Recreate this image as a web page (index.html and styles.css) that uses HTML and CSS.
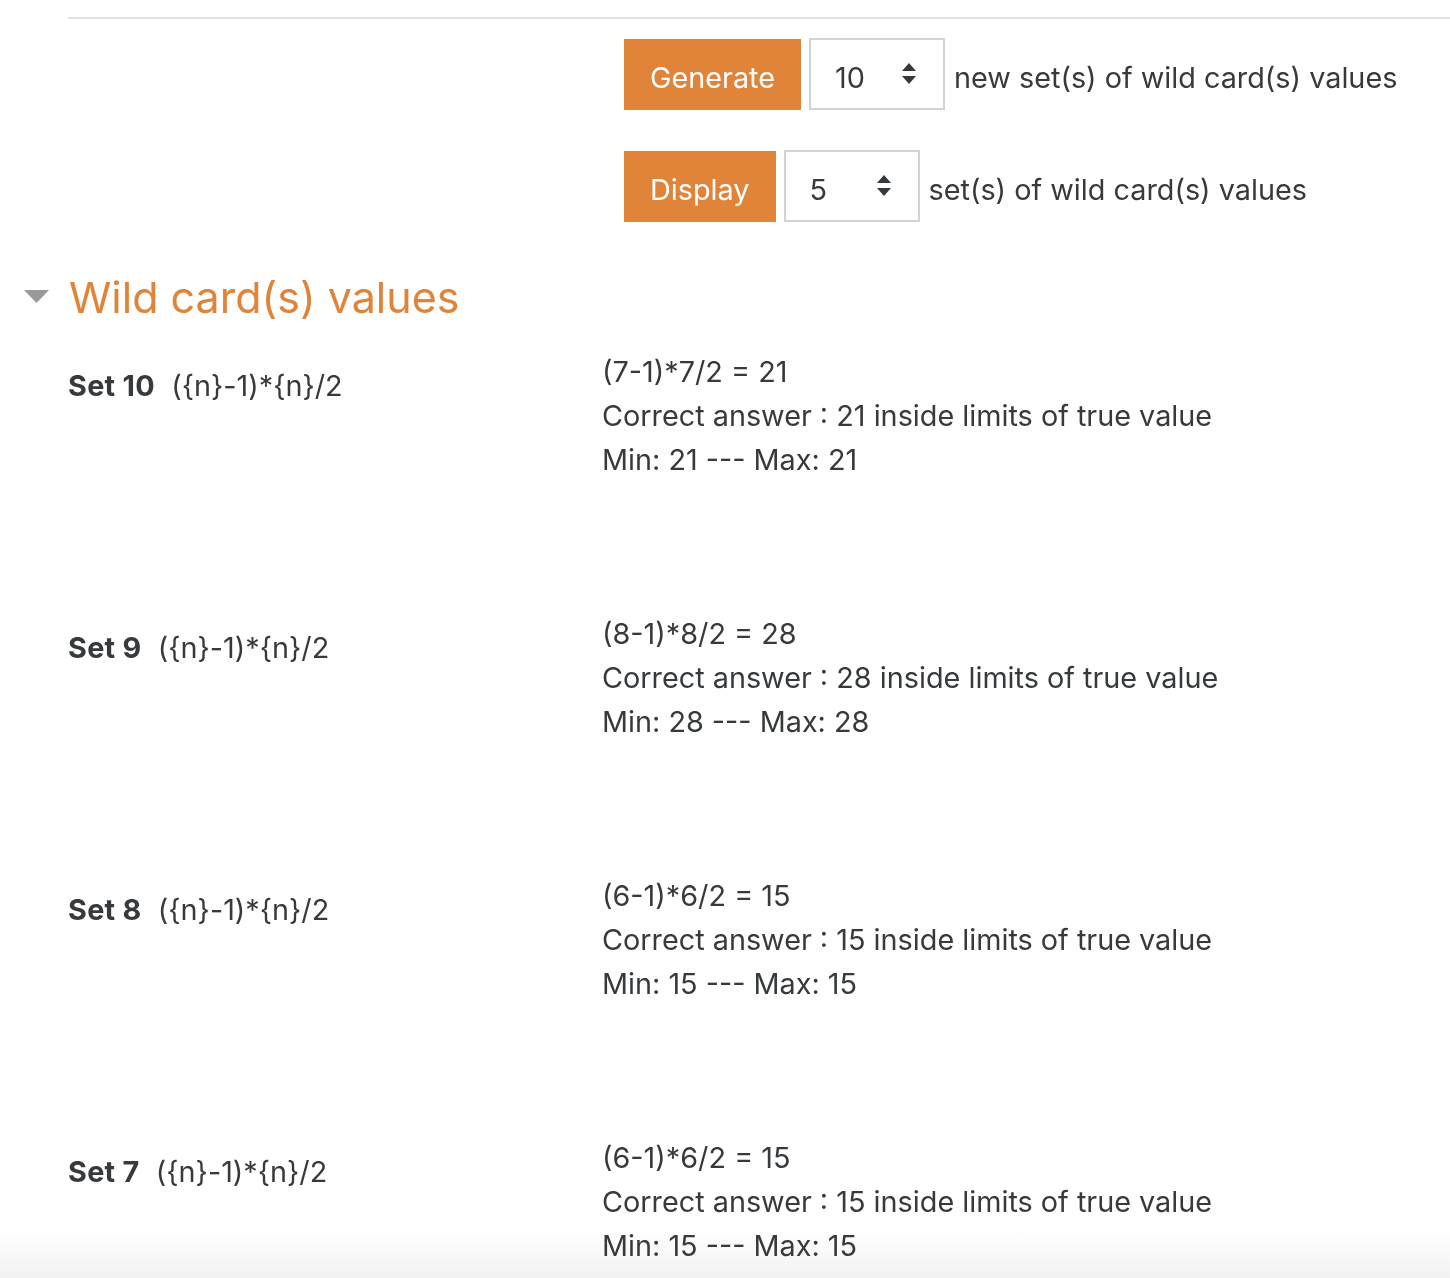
FILE: index.html
```html
<!DOCTYPE html>
<html>
<head>
<meta charset="utf-8">
<link rel="stylesheet" href="styles.css">
</head>
<body>
<div class="page">
  <hr class="rule">
  <div class="controls">
    <div class="ctrl-row">
      <button class="btn">Generate</button>
      <div class="select"><span class="select-value">10</span><svg class="arrows" width="16" height="22" viewBox="0 0 16 22"><path d="M8 0 L15 8 L1 8 Z M1 13 L15 13 L8 21 Z" fill="#373a3c"/></svg></div>
      <span class="ctrl-label">new set(s) of wild card(s) values</span>
    </div>
    <div class="ctrl-row">
      <button class="btn">Display</button>
      <div class="select"><span class="select-value">5</span><svg class="arrows" width="16" height="22" viewBox="0 0 16 22"><path d="M8 0 L15 8 L1 8 Z M1 13 L15 13 L8 21 Z" fill="#373a3c"/></svg></div>
      <span class="ctrl-label">set(s) of wild card(s) values</span>
    </div>
  </div>
  <div class="section-head">
    <svg class="caret" width="26" height="14" viewBox="0 0 26 14"><path d="M0 0 L25 0 L12.5 13 Z" fill="#999"/></svg>
    <h3 class="section-title">Wild card(s) values</h3>
  </div>
  <div class="sets">
    <div class="set">
      <div class="set-label"><b>Set 10</b>&nbsp; ({n}-1)*{n}/2</div>
      <div class="set-body"><div>(7-1)*7/2 = 21</div><div>Correct answer : 21 inside limits of true value</div><div>Min: 21 --- Max: 21</div></div>
    </div>
    <div class="set">
      <div class="set-label"><b>Set 9</b>&nbsp; ({n}-1)*{n}/2</div>
      <div class="set-body"><div>(8-1)*8/2 = 28</div><div>Correct answer : 28 inside limits of true value</div><div>Min: 28 --- Max: 28</div></div>
    </div>
    <div class="set">
      <div class="set-label"><b>Set 8</b>&nbsp; ({n}-1)*{n}/2</div>
      <div class="set-body"><div>(6-1)*6/2 = 15</div><div>Correct answer : 15 inside limits of true value</div><div>Min: 15 --- Max: 15</div></div>
    </div>
    <div class="set">
      <div class="set-label"><b>Set 7</b>&nbsp; ({n}-1)*{n}/2</div>
      <div class="set-body"><div>(6-1)*6/2 = 15</div><div>Correct answer : 15 inside limits of true value</div><div>Min: 15 --- Max: 15</div></div>
    </div>
  </div>
</div>
<div class="fade"></div>
</body>
</html>
```
FILE: styles.css
```css
html {
  margin: 0;
  padding: 0;
  background: #fff;
}
body {
  margin: 0;
  padding: 0;
  font-family: "Inter", "Liberation Sans", sans-serif;
  font-size: 28.8px;
  color: #373a3c;
  overflow: hidden;
  height: 1278px;
}
.page {
  padding-left: 68px;
  padding-top: 17px;
}
.rule {
  border: 0;
  border-top: 2px solid #dee2e6;
  margin: 0;
}
.controls {
  padding-left: 556px;
  padding-top: 19px;
  display: flex;
  flex-direction: column;
  gap: 40px;
}
.ctrl-row {
  display: flex;
  align-items: center;
  height: 72px;
}
.btn {
  font: inherit;
  color: #fff;
  background: #e0843a;
  border: 0;
  height: 71px;
  padding: 6px 26px 0;
  margin-right: 8px;
  cursor: pointer;
}
.select {
  box-sizing: border-box;
  width: 136px;
  height: 72px;
  border: 2px solid #ced4da;
  display: flex;
  align-items: center;
  justify-content: space-between;
  padding: 0 26px 0 24px;
  margin-right: 9px;
}
.select-value {
  padding-top: 6px;
}
.ctrl-label {
  padding-top: 6px;
}
.arrows { display: block; }
.section-head {
  display: flex;
  align-items: center;
  margin-left: -44px;
  margin-top: 46px;
}
.caret {
  margin-right: 19px;
}
.section-title {
  margin: 0;
  font-weight: 400;
  font-size: 43px;
  line-height: 58px;
  color: #e0843a;
}
.sets {
  margin-top: 24px;
}
.set {
  display: flex;
  height: 262px;
  line-height: 44px;
}
.set-label {
  width: 534px;
  padding-top: 14px;
}
.set-label b {
  font-weight: 700;
  letter-spacing: 0.3px;
}
.fade {
  position: fixed;
  left: 0;
  right: 0;
  bottom: 0;
  height: 48px;
  z-index: -1;
  background: linear-gradient(to bottom, rgba(243,243,243,0), #f2f2f2);
  pointer-events: none;
}
```
